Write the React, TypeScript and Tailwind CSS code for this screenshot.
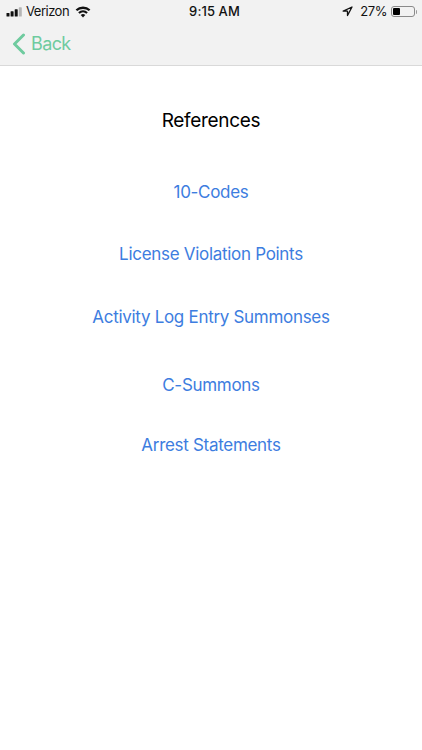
const LINKS = [
  { label: '10-Codes', className: 'mt-[47px]' },
  { label: 'License Violation Points', className: 'mt-[38px]' },
  { label: 'Activity Log Entry Summonses', className: 'mt-[39px]' },
  { label: 'C-Summons', className: 'mt-[44px]' },
  { label: 'Arrest Statements', className: 'mt-[36px]' },
];

function SignalBars() {
  return (
    <svg width="17" height="10" viewBox="0 0 17 10" className="fill-[#111]">
      <rect x="0.5" y="6" width="3" height="3.5" rx="0.6" />
      <rect x="4.6" y="4.2" width="3" height="5.3" rx="0.6" />
      <rect x="8.7" y="2.2" width="3" height="7.3" rx="0.6" />
      <rect x="12.8" y="0.3" width="3" height="9.2" rx="0.6" fill="#b5b5b5" />
    </svg>
  );
}

function Wifi() {
  return (
    <svg width="16" height="12" viewBox="0 0 16 12" className="fill-[#111]">
      <path d="M8 11.6 5.7 9a3.3 3.3 0 0 1 4.6 0L8 11.6Z" />
      <path d="M4.6 7.8 3.2 6.2a7.2 7.2 0 0 1 9.6 0l-1.4 1.6a5.1 5.1 0 0 0-6.8 0Z" />
      <path d="M2.2 5.1.6 3.4a11 11 0 0 1 14.8 0l-1.6 1.7a8.7 8.7 0 0 0-11.6 0Z" />
    </svg>
  );
}

function LocationArrow() {
  return (
    <svg width="11" height="11" viewBox="0 0 11 11" fill="none" stroke="#111" strokeWidth="1.3" strokeLinejoin="round">
      <path d="M10 1 1.2 5.2h4.3v4.3L10 1Z" />
    </svg>
  );
}

function Battery() {
  return (
    <div className="flex items-center">
      <div className="flex h-[11px] w-[24px] items-center rounded-[3px] border border-[#8a8a8a] p-px">
        <div className="h-full w-[7px] rounded-[1px] bg-black" />
      </div>
      <div className="ml-px h-[4px] w-px rounded-r-sm bg-[#9a9a9a]" />
    </div>
  );
}

function BackChevron() {
  return (
    <svg width="14" height="22" viewBox="0 0 14 22" fill="none" stroke="#6fcb9f" strokeWidth="3" strokeLinecap="round" strokeLinejoin="round">
      <path d="M11.5 2 2.5 11l9 9" />
    </svg>
  );
}

export default function App() {
  return (
    <div className="h-[750px] w-[422px] overflow-hidden bg-white font-['Inter',sans-serif]">
      <header className="h-[66px] border-b border-[#d9d9d9] bg-[#f2f2f2]">
        <div className="flex h-[22px] items-center justify-between pl-[6px] pr-[5px] pt-px text-[13px] text-[#111]">
          <div className="flex w-[130px] items-center gap-[3px]">
            <SignalBars />
            <span className="tracking-[-0.5px]">Verizon</span>
            <span className="ml-[3px]"><Wifi /></span>
          </div>
          <span className="ml-[6px] text-[13px] font-medium tracking-[0.1px]">9:15 AM</span>
          <div className="flex w-[130px] items-center justify-end gap-[4px]">
            <span><LocationArrow /></span>
            <span className="ml-[3px] tracking-[-0.4px]">27%</span>
            <Battery />
          </div>
        </div>
        <div className="flex h-[43px] items-center gap-[5px] pl-[12px] text-[#6fcb9f]">
          <BackChevron />
          <span className="text-[18px] leading-[24px] tracking-[-0.6px]">Back</span>
        </div>
      </header>
      <main className="flex flex-col items-center pt-[43px]">
        <h1 className="h-[24px] text-[19px] leading-[24px] tracking-[-0.3px] text-black">References</h1>
        {LINKS.map((link) => (
          <a key={link.label} className={`h-[24px] text-[17px] leading-[24px] tracking-[-0.3px] text-[#3d7de0] ${link.className}`}>
            {link.label}
          </a>
        ))}
      </main>
    </div>
  );
}
